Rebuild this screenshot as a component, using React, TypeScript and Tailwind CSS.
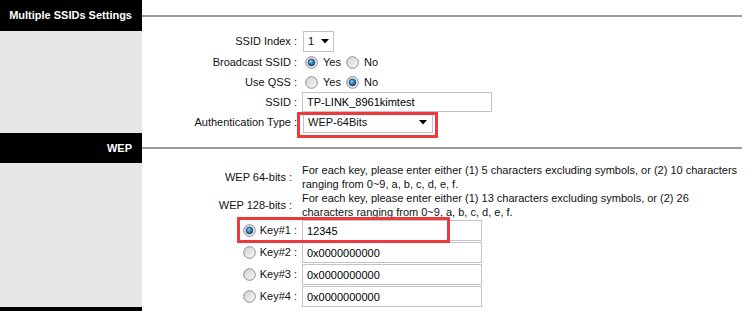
import type { ReactNode } from 'react'

function Radio({ checked }: { checked?: boolean }) {
  return (
    <svg width="13" height="13" viewBox="0 0 13 13" className="shrink-0">
      <defs>
        <linearGradient id="radioBg" x1="0" y1="0" x2="1" y2="1">
          <stop offset="0" stopColor="#cfcfcf" />
          <stop offset="1" stopColor="#fbfbfb" />
        </linearGradient>
        <radialGradient id="radioDot" cx="0.4" cy="0.35" r="0.7">
          <stop offset="0" stopColor="#8fd0f5" />
          <stop offset="0.55" stopColor="#2a7ab5" />
          <stop offset="1" stopColor="#10456e" />
        </radialGradient>
      </defs>
      <circle cx="6.5" cy="6.5" r="5.8" fill="url(#radioBg)" stroke="#8c8c8c" strokeWidth="1" />
      {checked ? <circle cx="6.5" cy="6.5" r="3.4" fill="url(#radioDot)" stroke="#173f5f" strokeWidth="0.7" /> : null}
    </svg>
  )
}

function Arrow() {
  return (
    <svg width="8" height="5" viewBox="0 0 8 5" className="shrink-0">
      <path d="M0 0 H8 L4 4.5 Z" fill="#000" />
    </svg>
  )
}

function SectionHeader({ title, tall }: { title: string; tall?: boolean }) {
  return (
    <div className={`flex ${tall ? 'h-[31px]' : 'h-[30px]'}`}>
      <div
        className={`w-[142px] shrink-0 bg-black pr-[10px] text-right text-[11px] font-bold text-white ${tall ? 'leading-[31px]' : 'leading-[30px]'}`}
      >
        {title}
      </div>
      <div className={`flex-1 pr-[8px] ${tall ? 'pt-[15px]' : 'pt-[14px]'}`}>
        <div className="h-[2px] w-full bg-[#9b9b9b]" />
      </div>
    </div>
  )
}

function Row({ label, h, children }: { label: ReactNode; h: string; children: ReactNode }) {
  return (
    <div className={`grid grid-cols-[156px_1fr] ${h}`}>
      <div className="flex items-center justify-end whitespace-nowrap pr-[1px]">{label}</div>
      <div className="flex items-center pl-[4px]">{children}</div>
    </div>
  )
}

const inputCls = 'h-[20px] border border-[#c3c3c3] bg-white px-[4px] text-[11px] text-black outline-none font-[inherit]'

function KeyRow({ n, value, checked }: { n: number; value: string; checked?: boolean }) {
  return (
    <div className="grid h-[22px] grid-cols-[156px_1fr]">
      <div className="flex items-center justify-end gap-[4px] whitespace-nowrap pr-[1px] pt-px">
        <Radio checked={checked} />
        <span>Key#{n} :</span>
      </div>
      <div className="flex items-end pl-[4px]">
        <input readOnly value={value} className={`${inputCls} h-[21px] w-[180px]`} />
      </div>
    </div>
  )
}

export default function App() {
  return (
    <div className="relative h-[311px] w-[750px] overflow-hidden bg-white font-['Liberation_Sans',Arial,sans-serif] text-[11px] text-[#111]">
      <SectionHeader title="Multiple SSIDs Settings" tall />
      <div className="flex">
        <div className="w-[142px] shrink-0 bg-[#e6e6e6]" />
        <div className="flex-1">
          <Row label="SSID Index :" h="h-[21px]">
            <div className="ml-px flex h-[21px] w-[31px] items-center justify-between border border-[#c3c3c3] bg-white pl-[4px] pr-[4px]">
              <span>1</span>
              <Arrow />
            </div>
          </Row>
          <Row label="Broadcast SSID :" h="h-[20px]">
            <div className="ml-[3px] flex items-center gap-[5px]">
              <Radio checked />
              <span>Yes</span>
              <Radio />
              <span>No</span>
            </div>
          </Row>
          <Row label="Use QSS :" h="h-[20px]">
            <div className="ml-[3px] flex items-center gap-[5px]">
              <Radio />
              <span>Yes</span>
              <Radio checked />
              <span>No</span>
            </div>
          </Row>
          <Row label="SSID :" h="h-[20px]">
            <input readOnly value="TP-LINK_8961kimtest" className={`${inputCls} w-[190px]`} />
          </Row>
          <Row label="Authentication Type :" h="h-[21px]">
            <div className="ml-px flex h-[20px] w-[130px] items-center justify-between border border-[#c3c3c3] bg-white pl-[4px] pr-[5px]">
              <span>WEP-64Bits</span>
              <Arrow />
            </div>
          </Row>
        </div>
      </div>

      <SectionHeader title="WEP" />
      <div className="flex">
        <div className="w-[142px] shrink-0 bg-[#e6e6e6]" />
        <div className="flex-1">
          <div className="grid grid-cols-[156px_1fr]">
            <div className="flex items-center justify-end pr-[6px]">WEP 64-bits :</div>
            <div className="w-[444px] pl-[4px] leading-[14px]">
              For each key, please enter either (1) 5 characters excluding symbols, or (2) 10 characters ranging from 0~9, a, b, c, d, e, f.
            </div>
            <div className="flex items-center justify-end pr-[6px]">WEP 128-bits :</div>
            <div className="w-[444px] pl-[4px] leading-[14px]">
              For each key, please enter either (1) 13 characters excluding symbols, or (2) 26 characters ranging from 0~9, a, b, c, d, e, f.
            </div>
          </div>
          <KeyRow n={1} value="12345" checked />
          <KeyRow n={2} value="0x0000000000" />
          <KeyRow n={3} value="0x0000000000" />
          <KeyRow n={4} value="0x0000000000" />
        </div>
      </div>

      <SectionHeader title="" />

      <div className="pointer-events-none absolute left-[297px] top-[112px] h-[26px] w-[141px] border-[3px] border-[#ec3a3c]" />
      <div className="pointer-events-none absolute left-[237px] top-[217px] h-[26px] w-[213px] border-[3px] border-[#ec3a3c]" />
    </div>
  )
}
